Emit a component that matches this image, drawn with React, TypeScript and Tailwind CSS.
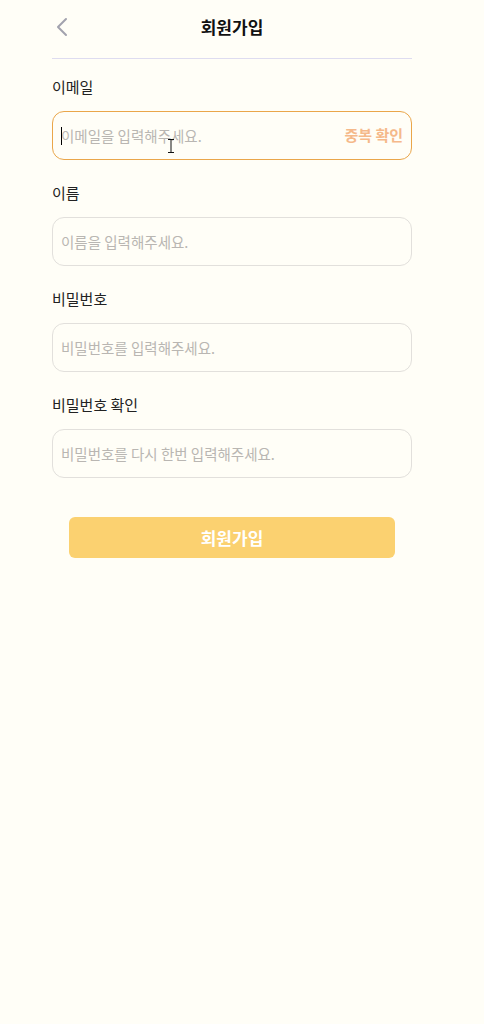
import { ChevronLeft } from "lucide-react";

const FONT = { fontFamily: '"Noto Sans CJK KR", "Noto Sans", sans-serif' };

type FieldProps = {
  label: string;
  placeholder: string;
  focused?: boolean;
  action?: string;
};

const Field = ({ label, placeholder, focused, action }: FieldProps) => (
  <div className="flex flex-col">
    <label className="text-[15px] leading-5 text-[#222]">{label}</label>
    <div
      className={`relative mt-[14px] flex h-[49px] items-center rounded-xl border px-[8px] ${
        focused ? "border-[#eaa64a]" : "border-[#e2e0dc]"
      }`}
    >
      {focused && <span className="absolute left-[8px] top-[15px] h-[18px] w-px bg-black" />}
      <span className="flex-1 text-[14.5px] text-[#b9b6b2]">{placeholder}</span>
      {action && <span className="text-[15px] font-bold text-[#f5b98a]">{action}</span>}
      {focused && (
        // mouse I-beam cursor
        <svg className="absolute left-[114px] top-[27px]" width="8" height="14" viewBox="0 0 8 14">
          <path d="M1 0.5h6M4 0.5v13M1 13.5h6" stroke="#111" strokeWidth="1" fill="none" />
        </svg>
      )}
    </div>
  </div>
);

const App = () => {
  return (
    <div className="min-h-screen w-full bg-[#fffef7]" style={FONT}>
      <div className="ml-[52px] w-[360px]">
        <header className="relative flex h-[59px] items-center justify-center border-b border-[#dedcf0] pb-1">
          <ChevronLeft className="absolute -left-[6px] top-[11px] h-8 w-8 text-[#a2a2ae]" strokeWidth={1.5} />
          <h1 className="text-[17px] font-bold text-[#111]">회원가입</h1>
        </header>

        <div className="mt-[18px] flex flex-col gap-[23px]">
          <Field label="이메일" placeholder="이메일을 입력해주세요." focused action="중복 확인" />
          <Field label="이름" placeholder="이름을 입력해주세요." />
          <Field label="비밀번호" placeholder="비밀번호를 입력해주세요." />
          <Field label="비밀번호 확인" placeholder="비밀번호를 다시 한번 입력해주세요." />
        </div>

        <div className="mt-[39px] flex justify-center">
          <button className="h-[41px] w-[326px] rounded-md bg-[#fbd170] text-[17px] font-bold text-white">
            회원가입
          </button>
        </div>
      </div>
    </div>
  );
};

export default App;
